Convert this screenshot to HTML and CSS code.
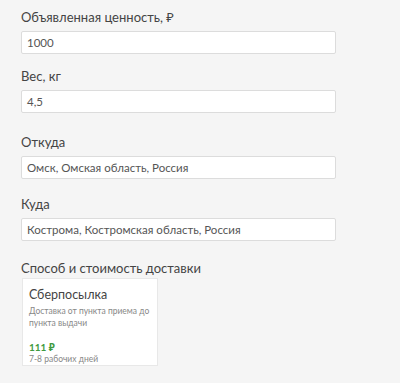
FILE: index.html
```html
<!DOCTYPE html>
<html lang="ru">
<head>
<meta charset="utf-8">
<link rel="stylesheet" href="styles.css">
</head>
<body>
<div class="form">
  <div class="field f1">
    <div class="label">Объявленная ценность, ₽</div>
    <div class="input">1000</div>
  </div>
  <div class="field f2">
    <div class="label">Вес, кг</div>
    <div class="input">4,5</div>
  </div>
  <div class="field f3">
    <div class="label">Откуда</div>
    <div class="input">Омск, Омская область, Россия</div>
  </div>
  <div class="field f4">
    <div class="label">Куда</div>
    <div class="input">Кострома, Костромская область, Россия</div>
  </div>
  <div class="field f5">
    <div class="label">Способ и стоимость доставки</div>
    <div class="card">
      <div class="card-title">Сберпосылка</div>
      <div class="card-desc">Доставка от пункта приема до пункта выдачи</div>
      <div class="card-price">111 ₽</div>
      <div class="card-days">7-8 рабочих дней</div>
    </div>
  </div>
</div>
</body>
</html>
```
FILE: styles.css
```css
html, body {
  margin: 0;
  padding: 0;
  background: #f5f5f5;
}
body {
  font-family: Lato, "Noto Sans", sans-serif;
  color: #333;
}
.form {
  padding: 8px 0 0 21px;
  width: 315px;
  display: flex;
  flex-direction: column;
}
.field {
  display: flex;
  flex-direction: column;
}
.f2 { margin-top: 13px; }
.f3 { margin-top: 20px; }
.f4 { margin-top: 16px; }
.f5 { margin-top: 18px; }
.label {
  font-size: 13px;
  line-height: 19px;
  height: 23px;
  color: #444;
}
.input {
  box-sizing: border-box;
  height: 23px;
  background: #fff;
  border: 1px solid #dcdcdc;
  border-radius: 2px;
  padding: 0 5px;
  font-size: 11.5px;
  line-height: 21px;
  color: #555;
}
.f5 .label { height: 19px; }
.card {
  box-sizing: border-box;
  width: 136px;
  height: 88px;
  margin-left: 1px;
  background: #fff;
  border: 1px solid #e8e8e8;
  padding: 8px 6px 0 6px;
}
.card-title {
  font-size: 12.5px;
  line-height: 16px;
  color: #444;
}
.card-desc {
  font-size: 8.5px;
  line-height: 12px;
  color: #888;
  margin-top: 2px;
}
.card-price {
  margin-top: 12px;
  font-size: 10px;
  font-weight: bold;
  line-height: 12px;
  color: #3f9a3f;
}
.card-days {
  font-size: 8.5px;
  line-height: 12px;
  color: #888;
}
```
